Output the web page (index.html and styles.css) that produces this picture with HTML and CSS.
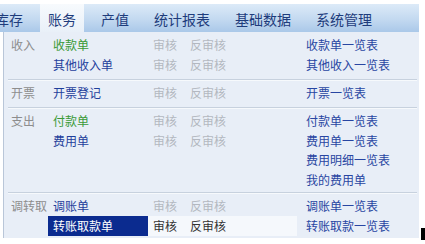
FILE: index.html
```html
<html>
  <head>
    <title>账务</title>
    <link rel="stylesheet" href="styles.css">
  </head>
  <body>
    <div class="menubar">
      <ul class="tabs">
        <li class="tab first">库存</li>
        <li class="tab active">账务</li>
        <li class="tab">产值</li>
        <li class="tab">统计报表</li>
        <li class="tab">基础数据</li>
        <li class="tab">系统管理</li>
      </ul>
    </div>

    <div class="panel">
      <div class="group">
        <div class="group-label">收入</div>
        <div class="bills">
          <div class="bill"><span class="bill-name income">收款单</span><span class="ops"><span>审核</span><span>反审核</span></span></div>
          <div class="bill"><span class="bill-name">其他收入单</span><span class="ops"><span>审核</span><span>反审核</span></span></div>
        </div>
        <div class="reports">
          <a>收款单一览表</a>
          <a>其他收入一览表</a>
        </div>
      </div>

      <div class="group">
        <div class="group-label">开票</div>
        <div class="bills">
          <div class="bill"><span class="bill-name">开票登记</span><span class="ops"><span>审核</span><span>反审核</span></span></div>
        </div>
        <div class="reports">
          <a>开票一览表</a>
        </div>
      </div>

      <div class="group tight">
        <div class="group-label">支出</div>
        <div class="bills">
          <div class="bill"><span class="bill-name income">付款单</span><span class="ops"><span>审核</span><span>反审核</span></span></div>
          <div class="bill"><span class="bill-name">费用单</span><span class="ops"><span>审核</span><span>反审核</span></span></div>
        </div>
        <div class="reports">
          <a>付款单一览表</a>
          <a>费用单一览表</a>
          <a>费用明细一览表</a>
          <a>我的费用单</a>
        </div>
      </div>

      <div class="group last">
        <div class="group-label">调转取</div>
        <div class="bills">
          <div class="bill"><span class="bill-name">调账单</span><span class="ops"><span>审核</span><span>反审核</span></span></div>
          <div class="bill selected"><span class="bill-name">转账取款单</span><span class="ops"><span>审核</span><span>反审核</span></span></div>
        </div>
        <div class="reports">
          <a>调账单一览表</a>
          <a>转账取款一览表</a>
        </div>
      </div>
    </div>

    <div class="caret"></div>
  </body>
</html>
```

FILE: styles.css
```css
body { margin: 0; width: 425px; height: 244px; overflow: hidden; position: relative; background: #fff; font-family: "Noto Sans CJK SC", "Noto Sans", sans-serif; font-size: 12px; }

.menubar { margin-top: 4px; width: 419px; height: 28px; overflow: hidden; background: linear-gradient(#dceaf8, #c3d9f0 55%, #aac8e9); }
.tabs { list-style: none; margin: 0 0 0 -13px; padding: 0; display: flex; height: 28px; }
.tab { padding: 2px 8px 0; margin-right: 9px; line-height: 26px; font-size: 14px; color: #1e3c7c; white-space: nowrap; }
.tab.active { background: linear-gradient(#f7fafd, #e9f0f8); }

.panel { margin-left: 3px; width: 415px; border-left: 1px solid #b9c6d8; background: #e8eef7; padding-bottom: 2px; }

.group { display: grid; grid-template-columns: 40px 100px 149px 1fr; margin: 0 2px 0 4px; padding: 3px 0 4px; border-bottom: 1px solid #c7d1de; box-shadow: 0 1px 0 #f6f9fc; }
.group.tight { padding-bottom: 2px; }
.group.tight .reports a { line-height: 19.7px; }
.group.last { border-bottom: none; box-shadow: none; padding-bottom: 0; }
.group-label { padding-left: 3px; line-height: 20px; color: #8d8d8d; white-space: nowrap; }

.bills { grid-column: 2 / 4; display: flex; flex-direction: column; }
.bill { display: grid; grid-template-columns: 100px 149px; line-height: 20px; }
.bill-name { padding-left: 5px; color: #1f3f9c; }
.bill-name.income { color: #3a9a36; }
.ops { display: flex; gap: 13px; padding-left: 5px; color: #b3b8c0; }

.bill.selected .bill-name { background: #0b2b8f; color: #fff; }
.bill.selected .ops { background: #f5f8fc; color: #333; }

.reports { display: flex; flex-direction: column; padding-left: 9px; }
.reports a { line-height: 20px; color: #2846a2; }

.caret { position: absolute; left: 421px; top: 228px; width: 4px; height: 12px; background: #000; }
```
